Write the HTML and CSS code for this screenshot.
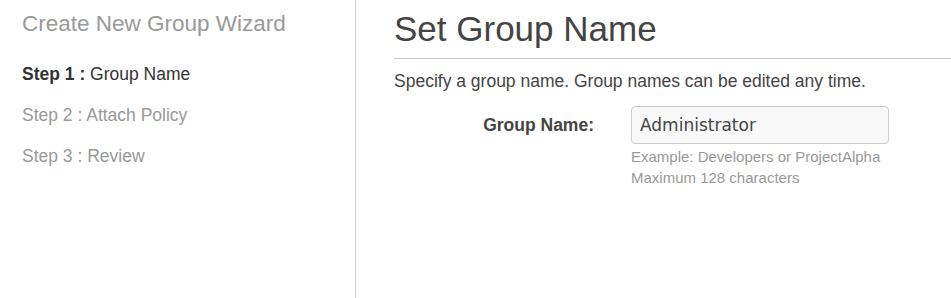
FILE: index.html
```html
<!DOCTYPE html>
<html lang="en">
<head>
  <meta charset="UTF-8">
  <title>Create New Group Wizard</title>
  <link rel="stylesheet" href="styles.css">
</head>
<body>
  <div class="wizard">
    <div class="sidebar">
      <h2>Create New Group Wizard</h2>
      <ul class="steps">
        <li class="current"><b>Step 1 :</b> Group Name</li>
        <li>Step 2 : Attach Policy</li>
        <li>Step 3 : Review</li>
      </ul>
    </div>
    <div class="content">
      <h1>Set Group Name</h1>
      <p class="intro">Specify a group name. Group names can be edited any time.</p>
      <div class="field">
        <label for="group-name">Group Name:</label>
        <div class="field-input">
          <input type="text" id="group-name" value="Administrator">
          <div class="hint">Example: Developers or ProjectAlpha</div>
          <div class="hint">Maximum 128 characters</div>
        </div>
      </div>
    </div>
  </div>
</body>
</html>
```

FILE: styles.css
```css
body {
  font-family: "Liberation Sans", Arial, sans-serif;
  margin: 0;
  padding: 0;
  background-color: #fff;
  color: #444;
}
.wizard {
  display: flex;
  height: 298px;
}
.sidebar {
  width: 333px;
  padding-left: 22px;
  border-right: 1px solid #ccc;
}
.sidebar h2 {
  font-size: 22.5px;
  font-weight: normal;
  color: #999;
  margin: 11px 0 0;
  line-height: 26px;
}
.steps {
  list-style-type: none;
  padding: 0;
  margin: 27px 0 0;
}
.steps li {
  font-size: 17.5px;
  line-height: 20px;
  color: #999;
  margin-bottom: 21px;
}
.steps li.current {
  color: #333;
}
.content {
  flex-grow: 1;
  padding-left: 38px;
}
.content h1 {
  font-size: 35px;
  font-weight: normal;
  color: #444;
  margin: 9px 0 0;
  line-height: 40px;
  padding-bottom: 9px;
  border-bottom: 1px solid #ccc;
}
.intro {
  font-size: 17.5px;
  margin: 12px 0 0;
  line-height: 20px;
}
.field {
  display: flex;
  margin-top: 15px;
}
.field label {
  width: 200px;
  text-align: right;
  font-size: 17.5px;
  font-weight: bold;
  padding-top: 9px;
  color: #444;
}
.field-input {
  margin-left: 37px;
}
.field-input input[type="text"] {
  width: 258px;
  height: 38px;
  box-sizing: border-box;
  padding: 0 8px;
  font-family: "DejaVu Sans", Verdana, sans-serif;
  font-size: 17px;
  color: #444;
  background-color: #f8f8f8;
  border: 1px solid #ccc;
  border-radius: 4px;
  margin-bottom: 2px;
}
.hint {
  font-size: 15px;
  color: #999;
  line-height: 21px;
}
```
